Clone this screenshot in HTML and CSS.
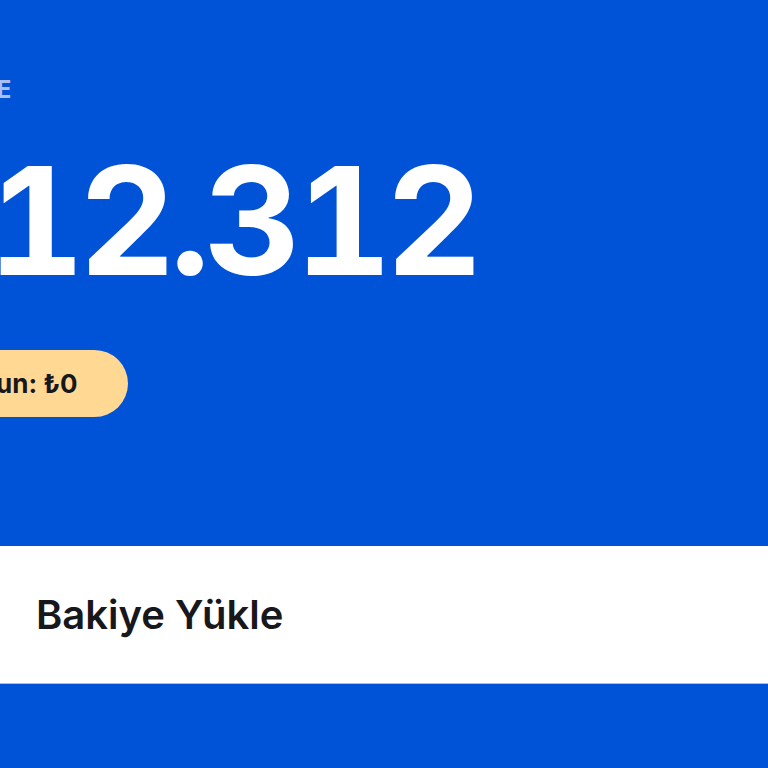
FILE: index.html
```html
<!DOCTYPE html>
<html lang="tr">
<head>
<meta charset="utf-8">
<link rel="stylesheet" href="styles.css">
</head>
<body>
<main class="screen">
  <section class="balance">
    <div class="balance-label">BAKİYE</div>
    <div class="balance-amount">₺12.312</div>
    <div class="balance-pill">Bonusun: ₺0</div>
  </section>
  <button class="topup">Bakiye Yükle</button>
</main>
</body>
</html>
```
FILE: styles.css
```css
html, body {
  margin: 0;
  padding: 0;
  background: #0052d6;
  overflow: hidden;
}
.screen {
  width: 768px;
  height: 768px;
  display: flex;
  flex-direction: column;
  background: #0052d6;
  font-family: "Inter", "Lato", sans-serif;
}
.balance {
  margin-left: -96px;
  padding-top: 78px;
  height: 546px;
  flex-shrink: 0;
  box-sizing: border-box;
  display: flex;
  flex-direction: column;
  align-items: flex-start;
}
.balance-label {
  margin-left: 10px;
  color: #a9c0f7;
  font-size: 24px;
  font-weight: 700;
  letter-spacing: 1.5px;
  line-height: 24px;
  white-space: nowrap;
}
.balance-amount {
  margin-left: -7px;
  color: #ffffff;
  font-size: 150px;
  font-weight: 700;
  line-height: 150px;
  letter-spacing: -6px;
  margin-top: 44px;
  font-feature-settings: "tnum";
  white-space: nowrap;
}
.balance-pill {
  margin-left: -12px;
  margin-top: 54px;
  background: #ffd994;
  color: #17171c;
  font-size: 26px;
  font-weight: 700;
  height: 67px;
  display: flex;
  align-items: center;
  padding: 0 50px 0 24px;
  border-radius: 34px;
  white-space: nowrap;
}
.topup {
  width: 768px;
  height: 138px;
  flex-shrink: 0;
  border: none;
  border-bottom: 1px solid #9fc0f0;
  background: #ffffff;
  color: #17171c;
  font-family: "Inter", "Lato", sans-serif;
  font-size: 40px;
  font-weight: 600;
  text-align: left;
  padding: 0 0 0 36px;
  margin: 0;
}
```
